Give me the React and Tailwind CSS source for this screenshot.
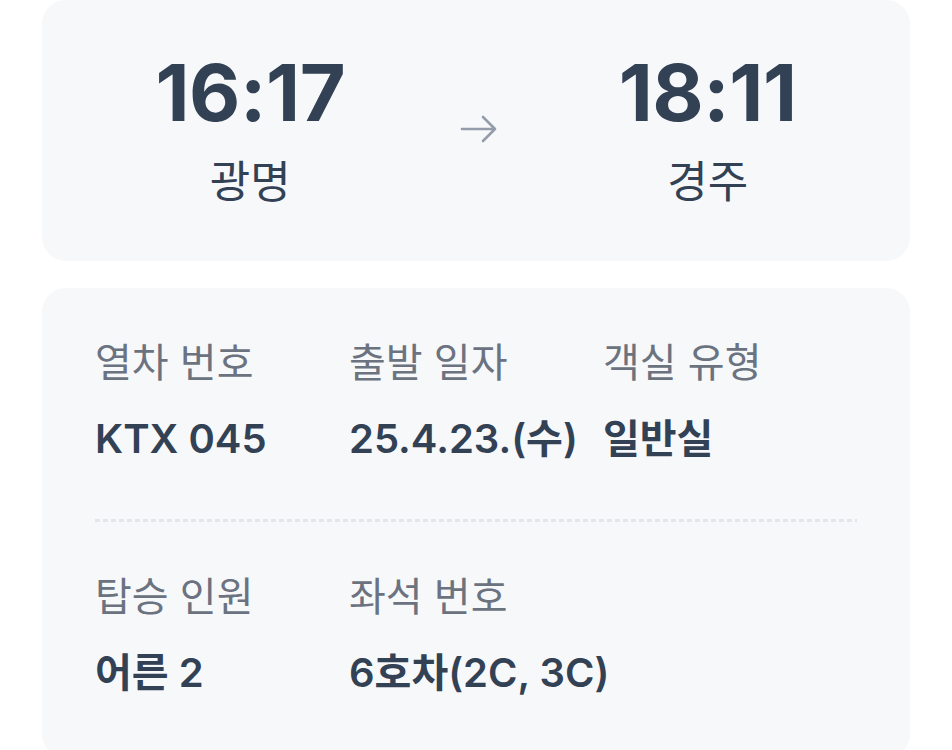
import React from "react";

const font = "font-['Inter','Noto_Sans_CJK_KR',sans-serif]";

function Arrow() {
  return (
    <svg width="38" height="28" viewBox="0 0 38 28" fill="none">
      <path d="M2 14h33M23 2l12 12-12 12" stroke="#949cab" strokeWidth="2.6" strokeLinecap="round" strokeLinejoin="round" />
    </svg>
  );
}

function Station({ time, name }) {
  return (
    <div className="flex flex-col items-center">
      <div className="text-[79px] leading-none font-bold tracking-[-0.005em] text-[#334155]">{time}</div>
      <div className="mt-[28px] text-[44px] leading-none font-normal text-[#334155]">{name}</div>
    </div>
  );
}

function Field({ label, value }) {
  return (
    <div className="flex flex-col">
      <div className="text-[40px] leading-none text-[#6b7280] whitespace-nowrap">{label}</div>
      <div className="mt-[36px] text-[40px] leading-none font-semibold text-[#334155] whitespace-nowrap">{value}</div>
    </div>
  );
}

export default function App() {
  return (
    <div className={`min-h-screen bg-white px-[42px] ${font}`}>
      <div className="h-[261px] rounded-[24px] bg-[#f7f8fa] grid grid-cols-3 items-start pl-[94px] pr-[88px] pt-[53px]">
        <Station time="16:17" name="광명" />
        <div className="flex justify-center pt-[62px]">
          <Arrow />
        </div>
        <Station time="18:11" name="경주" />
      </div>
      <div className="mt-[27px] h-[470px] rounded-[24px] bg-[#f7f8fa] px-[53px] pt-[55px]">
        <div className="grid grid-cols-3">
          <Field label="열차 번호" value="KTX 045" />
          <Field label="출발 일자" value="25.4.23.(수)" />
          <Field label="객실 유형" value="일반실" />
        </div>
        <div className="mt-[60px] h-[3px] bg-[repeating-linear-gradient(90deg,#e4e6eb_0_5px,transparent_5px_8px)]" />
        <div className="mt-[55px] grid grid-cols-3">
          <Field label="탑승 인원" value="어른 2" />
          <Field label="좌석 번호" value="6호차(2C, 3C)" />
        </div>
      </div>
    </div>
  );
}
